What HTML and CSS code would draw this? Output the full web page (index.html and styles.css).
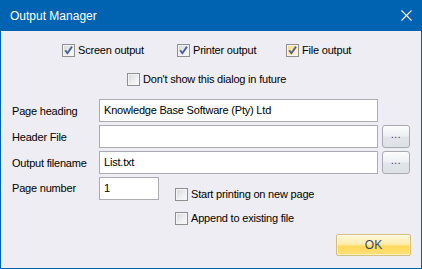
FILE: index.html
```html
<!DOCTYPE html>
<html lang="en">
<head>
<meta charset="utf-8">
<title>Output Manager</title>
<link rel="stylesheet" href="styles.css">
</head>
<body>
<div class="window">
  <div class="titlebar">
    <span class="title">Output Manager</span>
    <svg class="close" width="11" height="11" viewBox="0 0 11 11"><path d="M0.5 0.5 L10.5 10.5 M10.5 0.5 L0.5 10.5" stroke="#fff" stroke-width="1.1" fill="none"/></svg>
  </div>
  <div class="client">
    <div class="outputs">
      <label class="check"><span class="box"><svg viewBox="0 0 13 13"><path d="M3.2 6.3 L5.4 9.2 L10 2.6" stroke="#4b6192" stroke-width="1.9" fill="none"/></svg></span><span>Screen output</span></label>
      <label class="check"><span class="box"><svg viewBox="0 0 13 13"><path d="M3.2 6.3 L5.4 9.2 L10 2.6" stroke="#4b6192" stroke-width="1.9" fill="none"/></svg></span><span>Printer output</span></label>
      <label class="check"><span class="box hot"><svg viewBox="0 0 13 13"><path d="M3.2 6.3 L5.4 9.2 L10 2.6" stroke="#4b6192" stroke-width="1.9" fill="none"/></svg></span><span>File output</span></label>
    </div>
    <div class="dontshow">
      <label class="check"><span class="box"></span><span>Don't show this dialog in future</span></label>
    </div>
    <div class="form">
      <span class="label">Page heading</span>
      <div class="field">Knowledge Base Software (Pty) Ltd</div>
      <span></span>
      <span class="label">Header File</span>
      <div class="field"></div>
      <div class="ellipsis">...</div>
      <span class="label">Output filename</span>
      <div class="field">List.txt</div>
      <div class="ellipsis">...</div>
    </div>
    <div class="lower">
      <span class="label">Page number</span>
      <div class="field small">1</div>
      <div class="options">
        <label class="check"><span class="box"></span><span>Start printing on new page</span></label>
        <label class="check"><span class="box"></span><span>Append to existing file</span></label>
      </div>
    </div>
    <div class="footer">
      <div class="ok">OK</div>
    </div>
  </div>
</div>
</body>
</html>
```

FILE: styles.css
```css
* { box-sizing: border-box; }
html, body { margin: 0; padding: 0; }
body {
  font-family: "Liberation Sans", Arial, sans-serif;
  font-size: 11px;
  letter-spacing: -0.2px;
  color: #000;
  background: #eeedf3;
}
.window {
  width: 422px;
  height: 269px;
  border: 1px solid #0063b1;
  border-top: none;
  display: flex;
  flex-direction: column;
  background: #eeedf3;
}
.titlebar {
  height: 31px;
  margin: 0 -1px;
  background: #0063b1;
  display: flex;
  align-items: center;
  justify-content: space-between;
  padding: 0 10px;
  flex-shrink: 0;
}
.title {
  color: #fff;
  font-size: 12px;
  letter-spacing: 0;
  padding-top: 1px;
}
.close { display: block; }
.client {
  flex: 1;
  display: flex;
  flex-direction: column;
  padding-top: 13px;
}
.check {
  display: flex;
  align-items: center;
  gap: 3px;
  height: 13px;
  line-height: 13px;
  white-space: nowrap;
}
.box {
  width: 13px;
  height: 13px;
  flex-shrink: 0;
  border: 1px solid #8e8f8f;
  background: linear-gradient(135deg, #d4d6d9 0%, #eceef0 55%, #fbfbfb 100%);
  box-shadow: inset 0 0 0 1px #f4f4f4;
  position: relative;
}
.box.hot {
  background: linear-gradient(135deg, #f9d98a 0%, #fde9b6 55%, #fff6dc 100%);
}
.box svg {
  position: absolute;
  left: -1px;
  top: -1px;
  width: 13px;
  height: 13px;
}
.outputs {
  display: grid;
  grid-template-columns: 115px 109px auto;
  padding-left: 61px;
}
.dontshow {
  margin-top: 16px;
  padding-left: 126px;
}
.form {
  margin-top: 13px;
  padding-left: 10px;
  display: grid;
  grid-template-columns: 84px 279px 28px;
  column-gap: 4px;
  row-gap: 3px;
  grid-auto-rows: 23px;
  align-items: center;
}
.label { padding-left: 1px; }
.form .field, .form .ellipsis { align-self: stretch; }
.field {
  background: #fff;
  border: 1px solid #abadb3;
  padding: 0 4px;
  line-height: 21px;
  height: 23px;
  white-space: nowrap;
  overflow: hidden;
}
.ellipsis {
  border: 1px solid #a7abb0;
  border-radius: 3px;
  background: linear-gradient(#fcfcfd 0%, #eef0f3 45%, #e1e4e8 55%, #dee1e5 100%);
  text-align: center;
  font-size: 10px;
  line-height: 16px;
  color: #2a2f66;
  letter-spacing: 0.5px;
  padding-top: 1px;
}
.lower {
  margin-top: 3px;
  padding-left: 10px;
  display: flex;
  align-items: flex-start;
}
.lower .label {
  width: 88px;
  height: 23px;
  line-height: 23px;
}
.field.small { width: 60px; }
.options {
  margin-left: 16px;
  padding-top: 11px;
  display: flex;
  flex-direction: column;
  gap: 11px;
}
.footer {
  margin-top: 9px;
  display: flex;
  justify-content: flex-end;
  padding-right: 10px;
}
.ok {
  width: 75px;
  height: 22px;
  border: 1px solid #d7bf7c;
  border-radius: 2px;
  background: linear-gradient(#fff7d9 0%, #ffedb0 45%, #ffd858 58%, #ffe07a 100%);
  box-shadow: inset 0 0 0 1px rgba(255,255,255,0.55);
  text-align: center;
  line-height: 20px;
  font-size: 12px;
  letter-spacing: 0;
  color: #3b4868;
}
```
